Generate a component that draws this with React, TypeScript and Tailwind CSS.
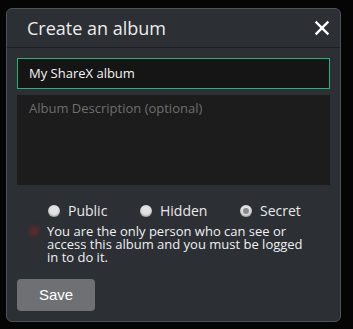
import { X } from 'lucide-react';

const font = { fontFamily: '"Open Sans", "Noto Sans", sans-serif' };

function Radio({ label, checked }: { label: string; checked?: boolean }) {
  return (
    <label className="flex items-center gap-[8px]">
      <span className="flex h-[12px] w-[12px] items-center justify-center rounded-full bg-[#e2e2e2] shadow-[inset_0_-1px_2px_rgba(0,0,0,0.35)]">
        {checked && <span className="h-[6px] w-[6px] rounded-full bg-[#8a8a8a]" />}
      </span>
      <span className="text-[14px] leading-[16px] text-[#e9e9e9]">{label}</span>
    </label>
  );
}

export default function App() {
  return (
    <div className="h-[329px] w-[353px] bg-[#050505] pl-[6px] pt-[8px]" style={font}>
      <div className="flex h-[314px] w-[335px] flex-col rounded-[6px] border-[1.5px] border-[#4d5158] bg-[#2c2f33]">
        <div className="flex h-[39px] items-center justify-between border-b border-[#1c1e21] pl-[20px] pr-[7px]">
          <h1 className="text-[18px] text-[#ececec]">Create an album</h1>
          <X size={22} strokeWidth={2.6} strokeLinecap="square" className="text-white" />
        </div>
        <div className="flex flex-col px-[10px] pt-[10px]">
          <div className="flex h-[31px] items-center border border-[#25b377] bg-[#151515] px-[11px] text-[13px] text-[#f4f4f4]">
            My ShareX album
          </div>
          <div className="mt-[6px] h-[90px] bg-[#1c1c1c] px-[12px] pt-[4px] text-[13px] text-[#6e6e6e]">
            Album Description (optional)
          </div>
          <div className="mt-[18px] flex pl-[31px]">
            <div className="w-[92px]"><Radio label="Public" /></div>
            <div className="w-[100px]"><Radio label="Hidden" /></div>
            <Radio label="Secret" checked />
          </div>
          <div className="mt-[6px] flex gap-[8px] pl-[12px]">
            <span className="mt-[1px] h-[10px] w-[10px] shrink-0 rounded-full bg-[#5e2a2d] blur-[2px]" />
            <p className="w-[262px] text-[13px] leading-[13px] text-[#eef0f2]">
              You are the only person who can see or access this album and you must be logged in to do it.
            </p>
          </div>
          <button
            className="mt-[15px] h-[32px] w-[78px] rounded-[4px] bg-[#6f7074] text-[15px] text-white"
            style={{ fontFamily: '"Liberation Sans", Arial, sans-serif' }}
          >
            Save
          </button>
        </div>
      </div>
    </div>
  );
}
